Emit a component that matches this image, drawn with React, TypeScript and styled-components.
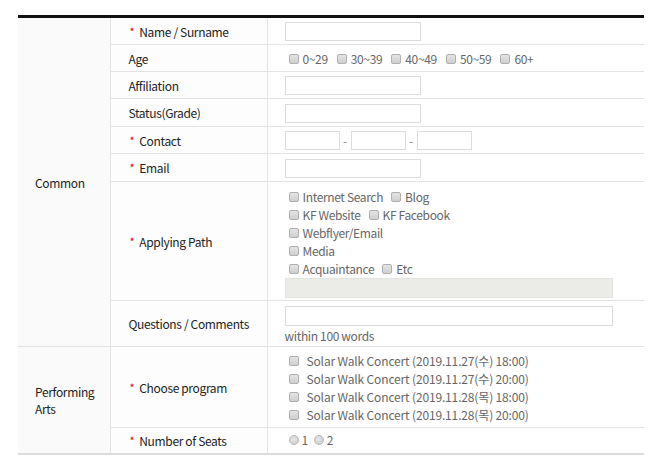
import React from "react";
import styled, { createGlobalStyle } from "styled-components";

const Global = createGlobalStyle`
  html, body { margin: 0; padding: 0; background: #fff; }
  body { font-family: "Noto Sans CJK KR", "Noto Sans", sans-serif; }
`;

const Page = styled.div`
  padding: 15px 16px 0 18px;
`;

const Table = styled.table`
  width: 626px;
  border-collapse: collapse;
  table-layout: fixed;
  border-top: 3px solid #111;
  border-bottom: 2px solid #dcdcdc;
  font-size: 12px;
  letter-spacing: -0.35px;
  color: #222;
`;

const Section = styled.th`
  background: #fafafa;
  border-right: 1px solid #e3e3e3;
  border-bottom: 1px solid #e3e3e3;
  text-align: left;
  font-weight: normal;
  padding: 0 0 0 17px;
  line-height: 17px;
  vertical-align: middle;
`;

const Label = styled.th<{ $h: number }>`
  height: ${(p) => p.$h}px;
  background: #fdfdfd;
  border-right: 1px solid #e3e3e3;
  border-bottom: 1px solid #e3e3e3;
  text-align: left;
  font-weight: normal;
  padding: 0 0 0 18px;
  vertical-align: middle;
  box-sizing: border-box;
`;

const Star = styled.span`
  color: #e60012;
  font-size: 11px;
  margin-left: 1px;
  margin-right: 5px;
  vertical-align: 1px;
`;

const Cell = styled.td<{ $top?: number }>`
  border-bottom: 1px solid #e3e3e3;
  padding: ${(p) => (p.$top !== undefined ? `${p.$top}px 0 0 17px` : "0 0 0 17px")};
  vertical-align: ${(p) => (p.$top !== undefined ? "top" : "middle")};
  color: #666;
`;

const TextInput = styled.span<{ $w: number; $h?: number }>`
  display: inline-block;
  width: ${(p) => p.$w}px;
  height: ${(p) => p.$h ?? 19}px;
  box-sizing: border-box;
  border: 1px solid #dcdcdc;
  background: #fff;
  vertical-align: middle;
`;

const Dash = styled.span`
  display: inline-block;
  width: 11px;
  text-align: center;
  vertical-align: middle;
  color: #888;
`;

const OptRow = styled.div<{ $gap?: number; $shift?: number }>`
  display: flex;
  align-items: center;
  gap: ${(p) => p.$gap ?? 4}px;
  line-height: 18px;
  padding-top: ${(p) => p.$shift ?? 0}px;
`;

const Opt = styled.label<{ $space?: number; $ls?: number }>`
  display: inline-flex;
  align-items: center;
  gap: ${(p) => p.$space ?? 4}px;
  white-space: nowrap;
  ${(p) => (p.$ls !== undefined ? `letter-spacing: ${p.$ls}px;` : "")}
`;

const Box = styled.span`
  display: inline-block;
  flex: none;
  width: 10px;
  height: 10px;
  box-sizing: border-box;
  border: 1px solid #b0b0b0;
  border-radius: 2px;
  background: linear-gradient(#e4e4e4, #cfcfcf);
  margin-left: 4px;
`;

const Radio = styled.span`
  display: inline-block;
  flex: none;
  width: 10px;
  height: 10px;
  box-sizing: border-box;
  border: 1px solid #b8b8b8;
  border-radius: 50%;
  background: radial-gradient(circle at 40% 40%, #e8e8e8, #c8c8c8);
  margin-left: 4px;
`;

const Stack = styled.div<{ $shift?: number }>`
  display: flex;
  flex-direction: column;
  padding-top: ${(p) => p.$shift ?? 0}px;
`;

const GrayBox = styled.div`
  width: 328px;
  height: 20px;
  background: #ebebe7;
  border: 1px solid #e2e2de;
  box-sizing: border-box;
`;

const Note = styled.div`
  margin-top: 3px;
  line-height: 14px;
`;

const Req = ({ children }: { children: React.ReactNode }) => (
  <>
    <Star>*</Star>
    {children}
  </>
);

const programs = [
  "Solar Walk Concert (2019.11.27(수) 18:00)",
  "Solar Walk Concert (2019.11.27(수) 20:00)",
  "Solar Walk Concert (2019.11.28(목) 18:00)",
  "Solar Walk Concert (2019.11.28(목) 20:00)",
];

export default function App() {
  return (
    <Page>
      <Global />
      <Table>
        <colgroup>
          <col style={{ width: 92 }} />
          <col style={{ width: 157 }} />
          <col />
        </colgroup>
        <tbody>
          <tr>
            <Section rowSpan={8}>Common</Section>
            <Label $h={28}>
              <Req>Name / Surname</Req>
            </Label>
            <Cell>
              <TextInput $w={136} />
            </Cell>
          </tr>
          <tr>
            <Label $h={27}>Age</Label>
            <Cell>
              <OptRow $gap={5} $shift={2}>
                {["0~29", "30~39", "40~49", "50~59", "60+"].map((a) => (
                  <Opt key={a}>
                    <Box />
                    {a}
                  </Opt>
                ))}
              </OptRow>
            </Cell>
          </tr>
          <tr>
            <Label $h={27}>Affiliation</Label>
            <Cell>
              <TextInput $w={136} />
            </Cell>
          </tr>
          <tr>
            <Label $h={28}>Status(Grade)</Label>
            <Cell>
              <TextInput $w={136} />
            </Cell>
          </tr>
          <tr>
            <Label $h={27}>
              <Req>Contact</Req>
            </Label>
            <Cell>
              <TextInput $w={55} />
              <Dash>-</Dash>
              <TextInput $w={55} />
              <Dash>-</Dash>
              <TextInput $w={55} />
            </Cell>
          </tr>
          <tr>
            <Label $h={28}>
              <Req>Email</Req>
            </Label>
            <Cell>
              <TextInput $w={136} />
            </Cell>
          </tr>
          <tr>
            <Label $h={119}>
              <Req>Applying Path</Req>
            </Label>
            <Cell $top={6}>
              <Stack>
                <OptRow>
                  <Opt><Box />Internet Search</Opt>
                  <Opt><Box />Blog</Opt>
                </OptRow>
                <OptRow>
                  <Opt><Box />KF Website</Opt>
                  <Opt><Box />KF Facebook</Opt>
                </OptRow>
                <OptRow>
                  <Opt><Box />Webflyer/Email</Opt>
                </OptRow>
                <OptRow>
                  <Opt><Box />Media</Opt>
                </OptRow>
                <OptRow>
                  <Opt><Box />Acquaintance</Opt>
                  <Opt><Box />Etc</Opt>
                </OptRow>
                <GrayBox />
              </Stack>
            </Cell>
          </tr>
          <tr>
            <Label $h={46}>Questions / Comments</Label>
            <Cell $top={4}>
              <TextInput $w={328} $h={20} />
              <Note>within 100 words</Note>
            </Cell>
          </tr>
          <tr>
            <Section rowSpan={2}>
              Performing
              <br />
              Arts
            </Section>
            <Label $h={81}>
              <Req>Choose program</Req>
            </Label>
            <Cell>
              <Stack $shift={2}>
                {programs.map((p) => (
                  <OptRow key={p}>
                    <Opt $space={8} $ls={-0.15}>
                      <Box />
                      {p}
                    </Opt>
                  </OptRow>
                ))}
              </Stack>
            </Cell>
          </tr>
          <tr>
            <Label $h={26}>
              <Req>Number of Seats</Req>
            </Label>
            <Cell>
              <OptRow $gap={2}>
                <Opt $space={3}><Radio />1</Opt>
                <Opt $space={3}><Radio />2</Opt>
              </OptRow>
            </Cell>
          </tr>
        </tbody>
      </Table>
    </Page>
  );
}
